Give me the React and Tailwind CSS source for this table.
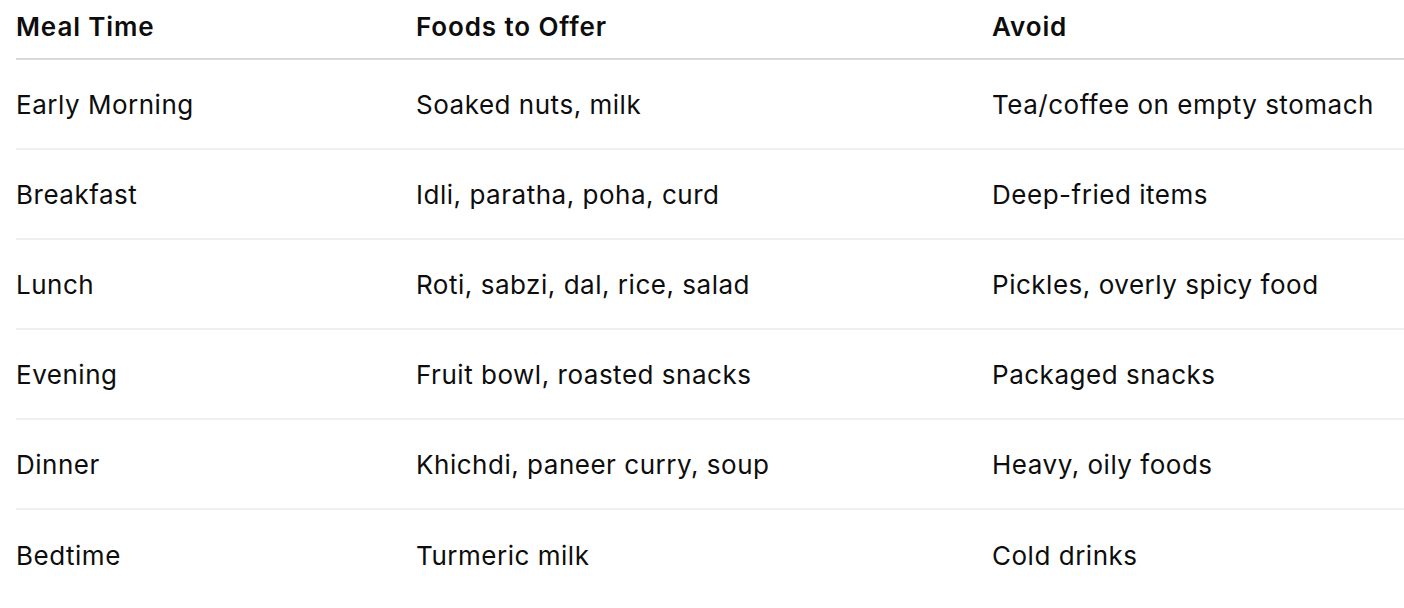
const ROWS = [
  ['Early Morning', 'Soaked nuts, milk', 'Tea/coffee on empty stomach'],
  ['Breakfast', 'Idli, paratha, poha, curd', 'Deep-fried items'],
  ['Lunch', 'Roti, sabzi, dal, rice, salad', 'Pickles, overly spicy food'],
  ['Evening', 'Fruit bowl, roasted snacks', 'Packaged snacks'],
  ['Dinner', 'Khichdi, paneer curry, soup', 'Heavy, oily foods'],
  ['Bedtime', 'Turmeric milk', 'Cold drinks'],
]

export default function App() {
  return (
    <div className="bg-white min-h-[608px] pl-4 text-[#0d0d0d] font-['Inter',sans-serif] text-[26px] leading-[32px] tracking-[0.02em]">
      <table className="w-full border-collapse text-left">
        <thead>
          <tr className="border-b-2 border-[#d9d9d9] tracking-[0.034em]">
            <th className="w-[400px] h-[59px] pb-1 font-semibold">Meal Time</th>
            <th className="w-[576px] pb-1 font-semibold">Foods to Offer</th>
            <th className="pb-1 font-semibold">Avoid</th>
          </tr>
        </thead>
        <tbody>
          {ROWS.map((r, i) => (
            <tr key={r[0]} className={i < ROWS.length - 1 ? 'border-b-2 border-[#f0f0f0]' : ''}>
              <td className="h-[90px] pt-0.5 font-normal">{r[0]}</td>
              <td className="pt-0.5">{r[1]}</td>
              <td className="pt-0.5">{r[2]}</td>
            </tr>
          ))}
        </tbody>
      </table>
    </div>
  )
}
